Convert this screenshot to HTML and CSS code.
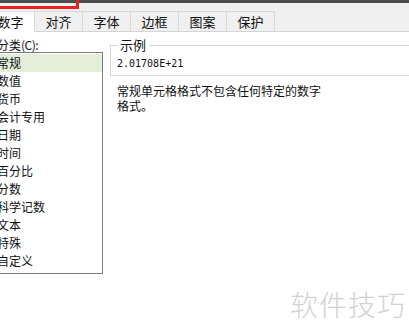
FILE: index.html
```html
<!DOCTYPE html>
<html lang="zh-CN">
  <head>
    <meta charset="UTF-8" />
    <title>单元格格式</title>
    <link rel="stylesheet" href="styles.css">
  </head>
  <body>
    <div class="titlebar"></div>
    <div class="highlight"></div>

    <div class="tabs">
      <div class="tab active">数字</div>
      <div class="tab">对齐</div>
      <div class="tab">字体</div>
      <div class="tab">边框</div>
      <div class="tab">图案</div>
      <div class="tab">保护</div>
    </div>

    <div class="panel">
      <div class="categories">
        <div class="label">分类<span class="key">(C):</span></div>
        <ul class="listbox">
          <li class="selected">常规</li>
          <li>数值</li>
          <li>货币</li>
          <li>会计专用</li>
          <li>日期</li>
          <li>时间</li>
          <li>百分比</li>
          <li>分数</li>
          <li>科学记数</li>
          <li>文本</li>
          <li>特殊</li>
          <li>自定义</li>
        </ul>
      </div>

      <div class="details">
        <fieldset class="sample">
          <legend>示例</legend>
          <div class="value">2.01708E+21</div>
        </fieldset>
        <p class="desc">常规单元格格式不包含任何特定的数字格式。</p>
      </div>
    </div>

    <div class="watermark">软件技巧</div>
  </body>
</html>
```

FILE: styles.css
```css
body {
  margin: 0;
  width: 409px;
  height: 334px;
  overflow: hidden;
  position: relative;
  background: #fff;
  color: #111;
  font-family: "Noto Sans CJK SC", sans-serif;
}

.titlebar {
  height: 3px;
  background: #4d4d4d;
}

/* red annotation frame, only the corner is visible */
.highlight {
  position: absolute;
  left: -10px;
  top: -10px;
  width: 83px;
  height: 13px;
  border: 3px solid #e8231f;
}

.tabs {
  height: 28px;
  background: #f0f0f0;
  border-bottom: 1px solid #d4d4d4;
  display: flex;
  align-items: flex-end;
  margin-left: -14px;
}

.tab {
  width: 47px;
  height: 19px;
  border: 1px solid #d9d9d9;
  border-bottom: none;
  margin-right: -1px;
  font-size: 13px;
  line-height: 19px;
  text-align: center;
  background: #f0f0f0;
}

.tab.active {
  background: #fff;
  height: 20px;
  margin-bottom: -1px;
  border-color: #e3e3e3;
}

.panel {
  display: flex;
  gap: 7px;
}

.categories {
  width: 115px;
  margin-left: -12px;
  flex-shrink: 0;
}

.label {
  margin-top: 5px;
  padding-left: 9px;
  font-size: 12px;
  line-height: 15px;
}

.label .key {
  letter-spacing: -0.5px;
}

.listbox {
  list-style: none;
  margin: 0;
  padding: 1px 0 3px;
  border: 1px solid #7a7a7a;
}

.listbox li {
  height: 18px;
  line-height: 18px;
  font-size: 12px;
  padding-left: 8px;
}

.listbox li.selected {
  background: #e4eed8;
}

.details {
  width: 320px;
  flex-shrink: 0;
}

.sample {
  margin: 6px 0 0;
  padding: 5px 6px 4px;
  border: 1px solid #d6d6d6;
  box-shadow: inset 1px 1px 0 #fff;
}

.sample legend {
  padding: 0 3px;
  font-size: 13px;
  line-height: 14px;
}

.value {
  font-family: "DejaVu Sans Mono", monospace;
  font-size: 10px;
  line-height: 14px;
}

.desc {
  margin: 7px 0 0;
  padding-left: 7px;
  width: 206px;
  font-size: 12px;
  line-height: 15px;
}

.watermark {
  position: absolute;
  left: 290px;
  top: 284px;
  font-size: 28px;
  font-weight: 300;
  letter-spacing: 1px;
  color: #d2d2d2;
}
```
